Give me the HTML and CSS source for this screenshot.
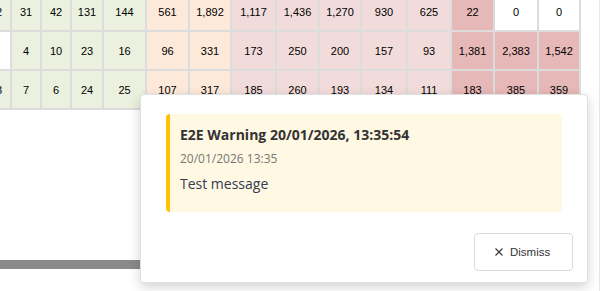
FILE: index.html
```html
<!DOCTYPE html>
<html lang="en">
<head>
  <meta charset="UTF-8" />
  <title>Results grid</title>
  <link rel="stylesheet" href="styles.css">
</head>
<body>
  <div class="page">
    <div class="main">
      <div class="grid-wrap">
        <table class="grid">
          <colgroup>
            <col class="w22"><col class="w28"><col class="w28"><col class="w30"><col class="w41">
            <col class="w41"><col class="w40"><col class="w43"><col class="w41"><col class="w40">
            <col class="w44"><col class="w42"><col class="w41"><col class="w42"><col class="w40">
          </colgroup>
          <tr>
            <td class="g">2</td><td class="g">31</td><td class="g">42</td><td class="g">131</td><td class="g">144</td>
            <td class="p">561</td><td class="p">1,892</td>
            <td class="r">1,117</td><td class="r">1,436</td><td class="r">1,270</td><td class="r">930</td><td class="r">625</td>
            <td class="rr">22</td><td class="blank">0</td><td class="blank">0</td>
          </tr>
          <tr>
            <td class="blank"></td><td class="g">4</td><td class="g">10</td><td class="g">23</td><td class="g">16</td>
            <td class="p">96</td><td class="p">331</td>
            <td class="r">173</td><td class="r">250</td><td class="r">200</td><td class="r">157</td><td class="r">93</td>
            <td class="rr">1,381</td><td class="rr">2,383</td><td class="rr">1,542</td>
          </tr>
          <tr>
            <td class="g">3</td><td class="g">7</td><td class="g">6</td><td class="g">24</td><td class="g">25</td>
            <td class="p">107</td><td class="p">317</td>
            <td class="r">185</td><td class="r">260</td><td class="r">193</td><td class="r">134</td><td class="r">111</td>
            <td class="rr">183</td><td class="rr">385</td><td class="rr">359</td>
          </tr>
        </table>
      </div>
      <div class="hscroll"><div class="hscroll-thumb"></div></div>
    </div>
    <div class="vscroll"></div>
  </div>

  <!-- notification dialog -->
  <div class="modal">
    <div class="modal-body">
      <div class="alert">
        <div class="alert-title">E2E Warning 20/01/2026, 13:35:54</div>
        <div class="alert-date">20/01/2026 13:35</div>
        <div class="alert-text">Test message</div>
      </div>
    </div>
    <div class="modal-footer">
      <button class="btn-dismiss">
        <svg width="8" height="8" viewBox="0 0 8 8"><path d="M0.5 0.5L7.5 7.5M7.5 0.5L0.5 7.5" stroke="#333" stroke-width="1.1" fill="none"/></svg>
        Dismiss
      </button>
    </div>
  </div>
</body>
</html>
```

FILE: styles.css
```css
body {
  margin: 0;
  font-family: 'Liberation Sans', Arial, sans-serif;
  font-size: 11px;
  color: #000;
  background: #fff;
  overflow: hidden;
}

.page {
  display: flex;
  height: 291px;
}

.main {
  flex: 0 0 599px;
  overflow: hidden;
}

.vscroll {
  flex: 1;
  border-left: 1px solid #e6e6e6;
}

.grid-wrap {
  height: 260px;
  overflow: hidden;
}

.grid {
  table-layout: fixed;
  width: 595px;
  border-collapse: separate;
  border-spacing: 2px;
  background: #dcdcdc;
  margin: -9px 0 0 -14px;
}

.grid td {
  height: 37px;
  padding: 0;
  text-align: center;
  vertical-align: middle;
  white-space: nowrap;
}

.w22 { width: 22px; }
.w28 { width: 28px; }
.w30 { width: 30px; }
.w40 { width: 40px; }
.w41 { width: 41px; }
.w42 { width: 42px; }
.w43 { width: 43px; }
.w44 { width: 44px; }

.grid td.g { background: #ebf1de; }
.grid td.p { background: #fde9d9; }
.grid td.r { background: #f2dcdb; }
.grid td.rr { background: #e6b8b7; }
.grid td.blank { background: #fff; }

.hscroll {
  height: 9px;
}

.hscroll-thumb {
  width: 420px;
  height: 100%;
  background: #8a8a8a;
}

.modal {
  position: absolute;
  left: 140px;
  top: 94px;
  width: 448px;
  box-sizing: border-box;
  background: #fff;
  border: 1px solid #e0e0e0;
  border-radius: 4px;
  box-shadow: 0 4px 12px rgba(0, 0, 0, 0.18);
  font-family: 'Open Sans', sans-serif;
}

.modal-body {
  padding: 19px 25px 0;
}

.alert {
  background: #fff8e3;
  border-left: 4px solid #ffc107;
  border-radius: 4px;
  padding: 11px 10px 18px;
}

.alert-title {
  font-size: 14px;
  line-height: 20px;
  font-weight: 700;
  color: #333;
  margin-bottom: 5px;
}

.alert-date {
  font-size: 12px;
  line-height: 18px;
  color: #777;
  margin-bottom: 6px;
}

.alert-text {
  font-size: 14px;
  line-height: 20px;
  color: #343b52;
}

.modal-footer {
  display: flex;
  justify-content: flex-end;
  padding: 21px 14px 11px;
}

.btn-dismiss {
  display: flex;
  align-items: center;
  gap: 7px;
  width: 99px;
  height: 38px;
  padding: 0 0 0 20px;
  background: #fff;
  border: 1px solid #dadada;
  border-radius: 4px;
  font-family: 'Liberation Sans', Arial, sans-serif;
  font-size: 11.5px;
  color: #333;
  cursor: pointer;
}
```
